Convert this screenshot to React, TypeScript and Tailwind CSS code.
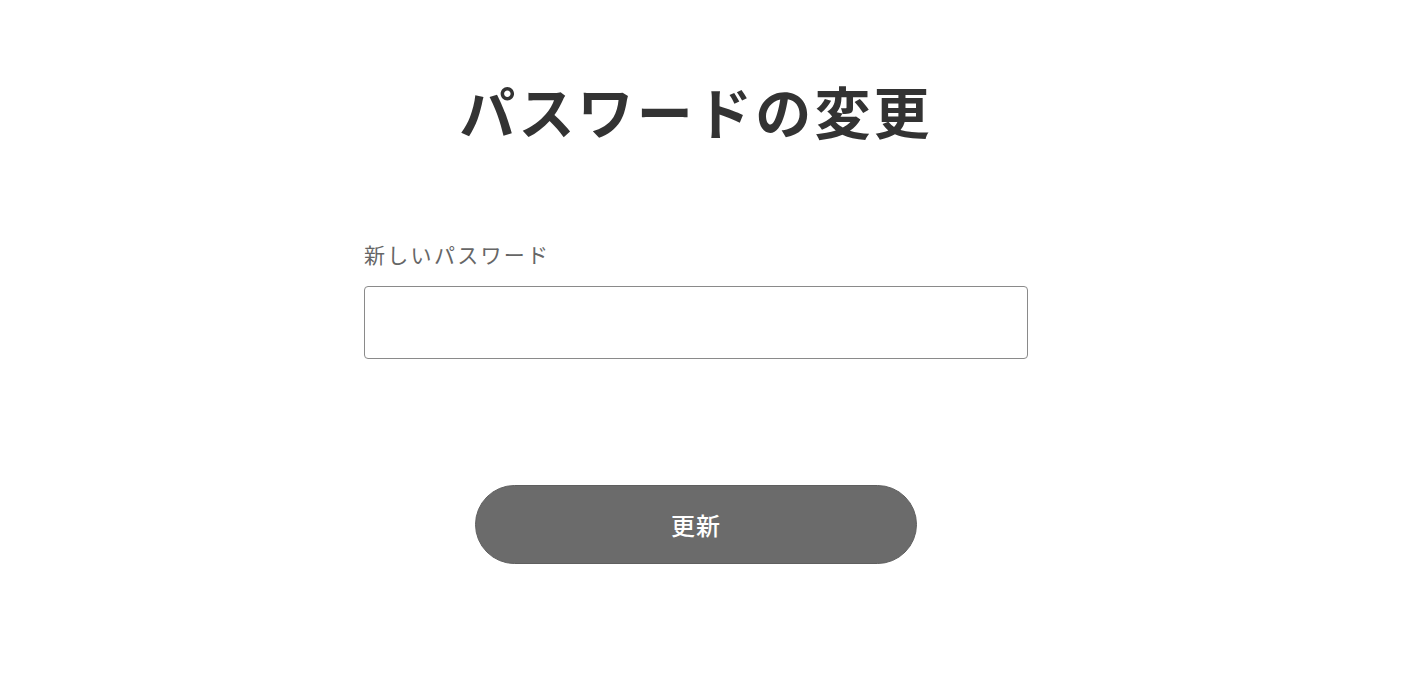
const font = { fontFamily: '"Noto Sans CJK JP", "Noto Sans", sans-serif' }

const App = () => {
  return (
    <div className="min-h-[686px] w-full bg-white pr-[14px]" style={font}>
      <div className="mx-auto flex w-[664px] flex-col">
        {/* タイトル */}
        <h1 className="mt-[75px] text-center text-[56px] font-bold leading-[70px] tracking-[3.2px] text-[#333333]">
          パスワードの変更
        </h1>
        {/* フォーム */}
        <label className="mt-[94px] text-[21px] leading-[30px] tracking-[2.3px] text-[#666666]">
          新しいパスワード
        </label>
        <input
          type="password"
          className="mt-[17px] h-[73px] w-full rounded-[4px] border border-[#8a8a8a] px-4 outline-none"
        />
        <button className="mx-auto mt-[126px] h-[79px] w-[442px] rounded-full border border-[#5f5f5f] bg-[#6b6b6b] text-[24px] font-medium tracking-[1px] text-white">
          更新
        </button>
      </div>
    </div>
  )
}

export default App
